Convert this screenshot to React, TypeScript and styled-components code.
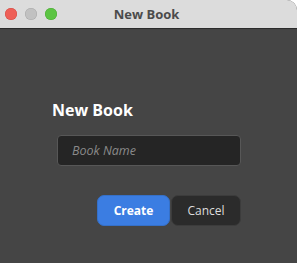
import * as React from 'react'
import styled, { createGlobalStyle } from 'styled-components'

const GlobalStyle = createGlobalStyle`
  html, body {
    margin: 0;
    padding: 0;
    background: #ffffff;
  }
  body {
    font-family: "Open Sans", "Liberation Sans", sans-serif;
  }
`

const Window = styled.div`
  width: 297px;
  height: 263px;
  display: flex;
  flex-direction: column;
  overflow: hidden;
  border-top-right-radius: 10px;
  background: #454545;
`

const TitleBar = styled.div`
  position: relative;
  height: 28px;
  flex: none;
  display: flex;
  align-items: center;
  justify-content: center;
  background: #dcdcdc;
  border-bottom: 1px solid #2c2c2c;
`

const Lights = styled.div`
  position: absolute;
  left: 5px;
  top: 8px;
  display: flex;
  gap: 8px;
`

const Light = styled.span<{ $color: string; $ring: string }>`
  width: 12px;
  height: 12px;
  border-radius: 50%;
  background: ${p => p.$color};
  box-shadow: inset 0 0 0 0.5px ${p => p.$ring};
`

const Title = styled.div`
  font-size: 13px;
  font-weight: 700;
  color: #4b4b4b;
  margin-right: 4px;
`

const Body = styled.div`
  flex: 1;
  display: flex;
  flex-direction: column;
  padding: 71px 56px 0 52px;
`

const Heading = styled.h2`
  margin: 0;
  font-size: 16px;
  line-height: 20px;
  font-weight: 700;
  color: #ffffff;
`

const NameInput = styled.input`
  margin: 15px 0 0 5px;
  height: 31px;
  box-sizing: border-box;
  padding: 0 14px;
  background: #252525;
  border: 1px solid #575757;
  border-radius: 4px;
  color: #eeeeee;
  font-family: inherit;
  font-size: 12.5px;
  outline: none;
  &::placeholder {
    color: #8a8a8a;
    font-style: italic;
  }
`

const Actions = styled.div`
  margin-top: 29px;
  display: flex;
  justify-content: flex-end;
  gap: 1px;
`

const Button = styled.button<{ $primary?: boolean }>`
  height: 31px;
  width: ${p => (p.$primary ? '73px' : '70px')};
  box-sizing: border-box;
  border-radius: 7px;
  font-family: inherit;
  font-size: 12px;
  font-weight: ${p => (p.$primary ? 700 : 400)};
  color: ${p => (p.$primary ? '#ffffff' : '#dddddd')};
  background: ${p => (p.$primary ? '#3b7de2' : '#2b2b2b')};
  border: 1px solid ${p => (p.$primary ? '#3570c8' : '#3c3c3c')};
  padding: 0;
`

export default function App() {
    return <>
        <GlobalStyle/>
        <Window>
            <TitleBar>
                <Lights>
                    <Light $color="#ee5f57" $ring="#d24b44"/>
                    <Light $color="#c1c1c1" $ring="#a8a8a8"/>
                    <Light $color="#5cc443" $ring="#4aa934"/>
                </Lights>
                <Title>New Book</Title>
            </TitleBar>
            <Body>
                <Heading>New Book</Heading>
                <NameInput placeholder="Book Name"/>
                <Actions>
                    <Button $primary>Create</Button>
                    <Button>Cancel</Button>
                </Actions>
            </Body>
        </Window>
    </>
}
